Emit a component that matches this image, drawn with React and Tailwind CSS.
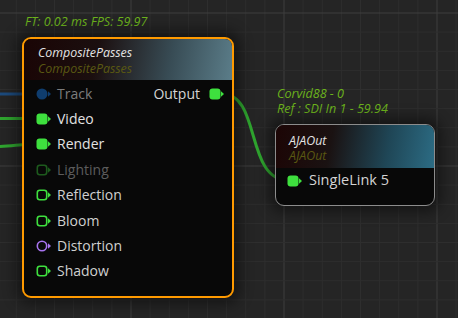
import React from 'react'

const GRID_MINOR = 19.125
const FONT = { fontFamily: '"Open Sans", "Noto Sans", sans-serif' }

const INPUTS = [
  { label: 'Track', pin: 'circleFilled', color: '#0f3d6e', text: 'text-[#7c7c7c]' },
  { label: 'Video', pin: 'filled', color: '#3ee03e', text: 'text-[#e2e2e2]' },
  { label: 'Render', pin: 'filled', color: '#3ee03e', text: 'text-[#e2e2e2]' },
  { label: 'Lighting', pin: 'outline', color: '#1d5a1d', text: 'text-[#5c5c5c]' },
  { label: 'Reflection', pin: 'outline', color: '#3ee03e', text: 'text-[#d0d0d0]' },
  { label: 'Bloom', pin: 'outline', color: '#3ee03e', text: 'text-[#d0d0d0]' },
  { label: 'Distortion', pin: 'circleOutline', color: '#a874f0', text: 'text-[#d0d0d0]' },
  { label: 'Shadow', pin: 'outline', color: '#3ee03e', text: 'text-[#d0d0d0]' },
]

function Pin({ type, color }) {
  return (
    <svg width="15" height="12" viewBox="0 0 15 12" className="shrink-0">
      {type === 'filled' && <rect x="0.5" y="0.5" width="11" height="11" rx="3" fill={color} />}
      {type === 'outline' && (
        <rect x="1.3" y="1.3" width="9.4" height="9.4" rx="2.5" fill="none" stroke={color} strokeWidth="1.6" />
      )}
      {type === 'circleFilled' && <circle cx="6" cy="6" r="5.5" fill={color} />}
      {type === 'circleOutline' && <circle cx="6" cy="6" r="4.7" fill="none" stroke={color} strokeWidth="1.6" />}
      <polygon points="12,3.3 15,6 12,8.7" fill={color} />
    </svg>
  )
}

function Grid() {
  const lines = []
  for (let i = -8; i < 26; i++) {
    const x = 131 + i * GRID_MINOR
    if (x < -1 || x > 460) continue
    lines.push(
      <line key={`v${i}`} x1={x} y1="0" x2={x} y2="318" stroke={i % 8 === 0 ? '#3f3f3f' : '#2e2e2e'} strokeWidth="1" />
    )
  }
  for (let j = -1; j < 18; j++) {
    const y = 13 + j * GRID_MINOR
    if (y < -1 || y > 320) continue
    lines.push(
      <line key={`h${j}`} x1="0" y1={y} x2="458" y2={y} stroke={j % 8 === 0 ? '#3f3f3f' : '#2e2e2e'} strokeWidth="1" />
    )
  }
  return (
    <svg className="absolute inset-0" width="458" height="318">
      {lines}
    </svg>
  )
}

function Wires() {
  return (
    <svg className="absolute inset-0" width="458" height="318">
      <path d="M0,94 L38,94" stroke="#1c4a7c" strokeWidth="3" fill="none" />
      <path d="M0,118.5 L38,118.5" stroke="#2fa52f" strokeWidth="3" fill="none" />
      <path d="M0,146.5 C14,146 22,144 38,144" stroke="#2fa52f" strokeWidth="3" fill="none" />
      <path d="M222,94 C262,94 244,181 290,181" stroke="#2fa52f" strokeWidth="3" fill="none" />
    </svg>
  )
}

export default function App() {
  return (
    <div className="relative w-[458px] h-[318px] overflow-hidden bg-[#252525]" style={FONT}>
      <Grid />
      <Wires />

      <div className="absolute left-[25px] top-[13px] text-[12.6px] leading-[17px] italic text-[#6cb31c]">
        FT: 0.02 ms FPS: 59.97
      </div>

      <div className="absolute left-[277px] top-[86px] text-[12.6px] leading-[15px] italic text-[#6cb31c]">
        <div>Corvid88 - 0</div>
        <div>Ref : SDI In 1 - 59.94</div>
      </div>

      {/* CompositePasses */}
      <div className="absolute left-[22px] top-[37px] w-[212px] rounded-[9px] border-2 border-[#ff9a00] bg-[#080808] overflow-hidden shadow-[0_0_14px_6px_rgba(0,0,0,0.45)]">
        <div className="h-[41px] pt-[6px] pl-[14px] bg-[linear-gradient(100deg,#1a0505_0%,#1b0f0f_35%,#384c55_70%,#5b7d89_100%)]">
          <div className="text-[12.4px] leading-[16px] italic text-[#e4e4e4]">CompositePasses</div>
          <div className="text-[12.4px] leading-[16px] italic text-[#5a5812]">CompositePasses</div>
        </div>
        <div className="pt-[1px] pb-[12px]">
          {INPUTS.map((row, i) => (
            <div key={row.label} className="h-[25.4px] flex items-center pl-[12px] pr-[8px]">
              <Pin type={row.pin} color={row.color} />
              <span className={`ml-[6px] text-[14px] leading-none ${row.text}`}>{row.label}</span>
              {i === 0 && (
                <div className="ml-auto flex items-center">
                  <span className="text-[14px] leading-none text-[#d4d4d4]">Output</span>
                  <span className="ml-[9px]">
                    <Pin type="filled" color="#3ee03e" />
                  </span>
                </div>
              )}
            </div>
          ))}
        </div>
      </div>

      {/* AJAOut */}
      <div className="absolute left-[275px] top-[124px] w-[160px] rounded-[9px] border-[1.5px] border-[#8c8c8c] bg-[#080808] overflow-hidden shadow-[0_0_14px_6px_rgba(0,0,0,0.45)]">
        <div className="h-[43px] pt-[8px] pl-[13px] bg-[linear-gradient(100deg,#1c0505_0%,#1a1212_35%,#1f4656_70%,#2c6c84_100%)]">
          <div className="text-[12.4px] leading-[15px] italic text-[#e4e4e4]">AJAOut</div>
          <div className="text-[12.4px] leading-[15px] italic text-[#5a5812]">AJAOut</div>
        </div>
        <div className="pb-[12px]">
          <div className="h-[25px] flex items-center pl-[11px]">
            <Pin type="filled" color="#3ee03e" />
            <span className="ml-[7px] text-[14.5px] leading-none text-[#d4d4d4]">SingleLink 5</span>
          </div>
        </div>
      </div>
    </div>
  )
}
